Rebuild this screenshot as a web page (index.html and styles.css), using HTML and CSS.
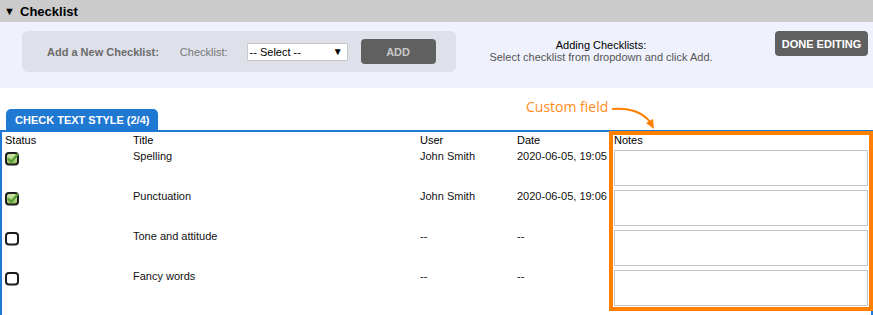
FILE: index.html
```html
<!DOCTYPE html>
<html lang="en">
<head>
    <meta charset="UTF-8">
    <title>Checklist</title>
    <link rel="stylesheet" href="styles.css">
</head>
<body>
    <div class="section-bar">
        <span class="toggle">&#9660;</span>
        <span class="section-title">Checklist</span>
    </div>

    <div class="add-panel">
        <div class="add-box">
            <span class="add-label">Add a New Checklist:</span>
            <span class="field-label">Checklist:</span>
            <div class="fake-select">
                <span>-- Select --</span>
                <span class="select-arrow">&#9660;</span>
            </div>
            <button class="btn btn-add">ADD</button>
        </div>
        <div class="help">
            <div class="help-title">Adding Checklists:</div>
            <div class="help-text">Select checklist from dropdown and click Add.</div>
        </div>
        <button class="btn btn-done">DONE EDITING</button>
    </div>

    <div class="tabs">
        <div class="tab">CHECK TEXT STYLE (2/4)</div>
    </div>

    <div class="checklist">
        <div class="grid">
            <div class="head">Status</div>
            <div class="head">Title</div>
            <div class="head">User</div>
            <div class="head">Date</div>
            <div class="head">Notes</div>

            <!-- row 1 -->
            <div class="cell"><svg class="check" width="15" height="14" viewBox="0 0 15 14"><defs><linearGradient id="g1" x1="0" y1="0" x2="0" y2="1"><stop offset="0" stop-color="#d9ecb8"/><stop offset="1" stop-color="#8fbf5a"/></linearGradient></defs><rect x="1" y="1" width="12" height="11.5" rx="3" fill="url(#g1)" stroke="#1c1c1c" stroke-width="2"/><path d="M3.5 7 L6.3 9.8 L12.5 2.5" fill="none" stroke="#5ca035" stroke-width="2.4" stroke-linecap="round" stroke-linejoin="round"/></svg></div>
            <div class="cell">Spelling</div>
            <div class="cell">John Smith</div>
            <div class="cell">2020-06-05, 19:05</div>
            <div class="cell"><textarea class="note"></textarea></div>

            <!-- row 2 -->
            <div class="cell"><svg class="check" width="15" height="14" viewBox="0 0 15 14"><defs><linearGradient id="g2" x1="0" y1="0" x2="0" y2="1"><stop offset="0" stop-color="#d9ecb8"/><stop offset="1" stop-color="#8fbf5a"/></linearGradient></defs><rect x="1" y="1" width="12" height="11.5" rx="3" fill="url(#g2)" stroke="#1c1c1c" stroke-width="2"/><path d="M3.5 7 L6.3 9.8 L12.5 2.5" fill="none" stroke="#5ca035" stroke-width="2.4" stroke-linecap="round" stroke-linejoin="round"/></svg></div>
            <div class="cell">Punctuation</div>
            <div class="cell">John Smith</div>
            <div class="cell">2020-06-05, 19:06</div>
            <div class="cell"><textarea class="note"></textarea></div>

            <!-- row 3 -->
            <div class="cell"><svg class="check" width="15" height="14" viewBox="0 0 15 14"><rect x="1" y="1" width="12" height="11.5" rx="3" fill="#fff" stroke="#1c1c1c" stroke-width="2"/></svg></div>
            <div class="cell">Tone and attitude</div>
            <div class="cell">--</div>
            <div class="cell">--</div>
            <div class="cell"><textarea class="note"></textarea></div>

            <!-- row 4 -->
            <div class="cell"><svg class="check" width="15" height="14" viewBox="0 0 15 14"><rect x="1" y="1" width="12" height="11.5" rx="3" fill="#fff" stroke="#1c1c1c" stroke-width="2"/></svg></div>
            <div class="cell">Fancy words</div>
            <div class="cell">--</div>
            <div class="cell">--</div>
            <div class="cell"><textarea class="note"></textarea></div>
        </div>

        <!-- annotation -->
        <div class="custom-frame"></div>
        <div class="custom-label">Custom field</div>
        <svg class="custom-arrow" width="50" height="30" viewBox="0 0 50 30">
            <path d="M1 4 C16 3 30 5 40 18" fill="none" stroke="#ff8000" stroke-width="2"/>
            <path d="M35 18 L43 24 L42 14 Z" fill="#ff8000"/>
        </svg>
    </div>
</body>
</html>
```

FILE: styles.css
```css
body {
    margin: 0;
    background: #fff;
    color: #000;
    font-family: "Liberation Sans", Arial, sans-serif;
    font-size: 11px;
}

.section-bar {
    height: 22px;
    background: #cccccc;
    display: flex;
    align-items: center;
    padding-left: 4px;
}

.toggle {
    font-size: 11px;
    width: 16px;
}

.section-title {
    font-size: 13px;
    font-weight: bold;
}

.add-panel {
    background: #eff2fc;
    height: 66px;
    box-sizing: border-box;
    padding: 9px 5px 0 22px;
    display: flex;
    align-items: flex-start;
}

.add-box {
    background: #dee0ea;
    border-radius: 6px;
    width: 434px;
    height: 41px;
    box-sizing: border-box;
    padding-left: 25px;
    display: flex;
    align-items: center;
}

.add-label {
    font-weight: bold;
    color: #6b6b6b;
    margin-right: 21px;
}

.field-label {
    color: #777;
    margin-right: 19px;
}

.fake-select {
    width: 101px;
    height: 18px;
    box-sizing: border-box;
    background: #fff;
    border: 1px solid #c9c9c9;
    display: flex;
    align-items: center;
    justify-content: space-between;
    padding: 0 4px 0 2px;
    margin-right: 13px;
    color: #000;
}

.select-arrow {
    font-size: 10px;
}

.btn {
    border: none;
    border-radius: 4px;
    background: #606060;
    font-family: "Liberation Sans", Arial, sans-serif;
    font-size: 11px;
    font-weight: bold;
    padding: 0;
}

.btn-add {
    width: 75px;
    height: 25px;
    color: #c8c8c8;
}

.btn-done {
    width: 93px;
    height: 25px;
    color: #fff;
}

.help {
    flex: 1;
    text-align: center;
    padding-right: 29px;
    margin-top: 8px;
    line-height: 12px;
}

.help-title {
    color: #000;
}

.help-text {
    color: #555;
}

.tabs {
    padding: 21px 0 0 6px;
    display: flex;
}

.tab {
    background: #1f78d2;
    color: #fff;
    font-weight: bold;
    height: 21px;
    line-height: 22px;
    width: 152px;
    box-sizing: border-box;
    padding-left: 9px;
    border-radius: 5px 5px 0 0;
}

.checklist {
    position: relative;
    border-top: 2px solid #1f78d2;
    border-left: 2px solid #1f78d2;
    border-right: 2px solid #1f78d2;
    height: 183px;
}

.grid {
    display: grid;
    grid-template-columns: 128px 287px 97px 97px 254px;
    grid-template-rows: 18px repeat(4, 40px);
    padding-left: 3px;
}

.head {
    padding-top: 2px;
    line-height: 13px;
    color: #000;
}

.cell {
    line-height: 13px;
    color: #111;
}

.check {
    display: block;
    margin-top: 2px;
}

.note {
    display: block;
    width: 254px;
    height: 36px;
    box-sizing: border-box;
    border: 1px solid #c4c4c4;
    margin: 0;
    resize: none;
    background: #fff;
}

.custom-frame {
    position: absolute;
    top: -1px;
    left: 607px;
    width: 264px;
    height: 180px;
    box-sizing: border-box;
    border: 4px solid #ff8000;
}

.custom-label {
    position: absolute;
    top: -35px;
    left: 524px;
    font-family: "Open Sans", sans-serif;
    font-size: 14px;
    color: #ff8c1a;
}

.custom-arrow {
    position: absolute;
    top: -27px;
    left: 609px;
}
```
